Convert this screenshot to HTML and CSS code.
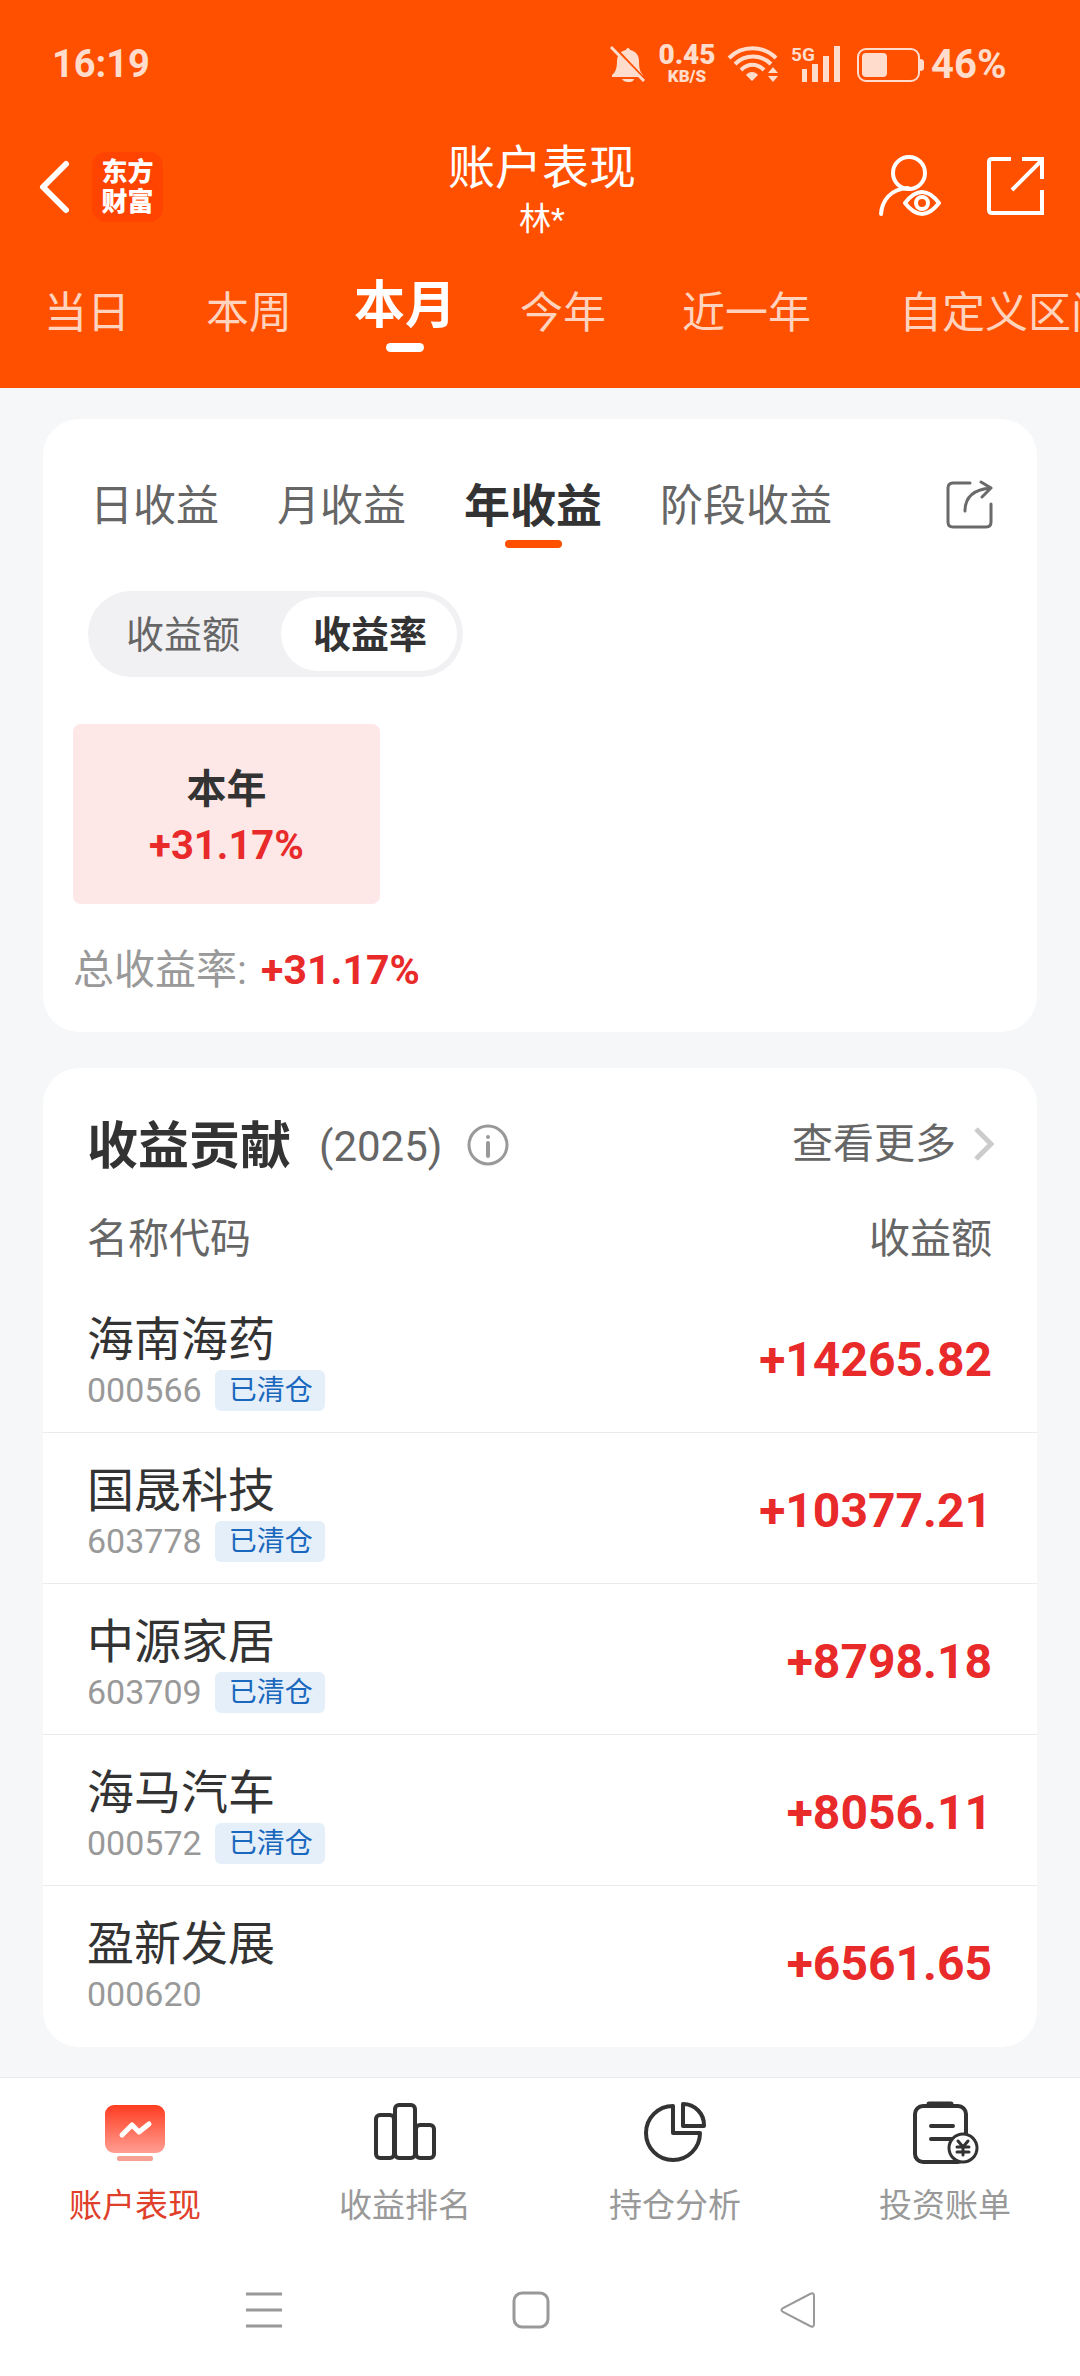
FILE: index.html
```html
<!DOCTYPE html>
<html lang="zh-CN">
<head>
<meta charset="utf-8">
<meta name="viewport" content="width=device-width">
<title>账户表现</title>
<link rel="stylesheet" href="styles.css">
</head>
<body>
<header class="header">
  <div class="status">
    <span class="status-time">16:19</span>
    <div class="status-icons">
      <svg width="38" height="40" viewBox="610 44 38 40" aria-hidden="true">
        <path fill="currentColor" d="M629 48c1 0 2 1 2 2 6 1 9 6 9 11 0 7 1 11 4 14v2h-31v-2c4-3 5-8 5-14 0-6 4-10 9-11 0-1 1-2 2-2zM623 79h12c-1 3-3 3-6 3s-5-1-6-3z"/>
        <path d="M614 46l34 36" stroke="#ff5000" stroke-width="3"/>
        <path d="M612 47l33 34" stroke="currentColor" stroke-width="3"/>
      </svg>
      <span class="speed"><b class="speed-value">0.45</b><b class="speed-unit">KB/S</b></span>
      <svg width="52" height="40" viewBox="727 44 52 40" aria-hidden="true">
        <g fill="none" stroke="currentColor" stroke-width="4">
          <path d="M729 58c13-13 34-13 47 0"/><path d="M735 64c10-10 26-10 36 0"/><path d="M741 70c7-7 16-7 23 0"/>
        </g>
        <path fill="currentColor" d="M752 81l-6-6c3-4 9-4 12 0zM768 73l5-6 5 6zM768 76l5 6 5-6z"/>
      </svg>
      <svg width="52" height="40" viewBox="789 44 52 40" aria-hidden="true">
        <text class="net" x="791" y="61">5G</text>
        <path fill="currentColor" d="M802 69h5v13h-5zM812 64h6v18h-6zM823 56h6v26h-6zM834 46h6v36h-6z"/>
      </svg>
      <svg class="battery" width="70" height="40" viewBox="851 44 70 40" aria-hidden="true">
        <rect x="858" y="49" width="61" height="32" rx="8" fill="none" stroke="currentColor" stroke-width="2"/>
        <rect x="862" y="53" width="25" height="24" rx="4" fill="currentColor"/>
        <path fill="currentColor" d="M920 59q4 0 4 3v6q0 3-4 3z"/>
      </svg>
      <span class="battery-level">46%</span>
    </div>
  </div>

  <div class="titlebar">
    <div class="titlebar-side">
      <button class="icon-button" aria-label="返回">
        <svg width="40" height="60" viewBox="36 157 40 60"><path d="M66 164L43 187l23 23" fill="none" stroke="#fff" stroke-width="6" stroke-linecap="round" stroke-linejoin="round"/></svg>
      </button>
      <span class="logo">东方<br>财富</span>
    </div>
    <div class="titlebar-main">
      <h1 class="title">账户表现</h1>
      <p class="subtitle">林*</p>
    </div>
    <div class="titlebar-side titlebar-actions">
      <button class="icon-button" aria-label="切换账户">
        <svg width="68" height="68" viewBox="876 153 68 68" fill="none" stroke="#fff" stroke-width="4" stroke-linecap="round">
          <circle cx="909" cy="173" r="16"/><path d="M881 214c1-13 9-25 27-26"/>
          <path d="M905 203q17-22 34 0q-17 22-34 0z" stroke-linejoin="round"/><circle cx="922" cy="203" r="6"/>
        </svg>
      </button>
      <button class="icon-button" aria-label="分享">
        <svg width="64" height="68" viewBox="984 153 64 68" fill="none" stroke="#fff" stroke-width="4">
          <path d="M1011 159h-19q-3 0-3 3v48q0 3 3 3h50v-23M1022 159h20v20M1042 160l-30 30"/>
        </svg>
      </button>
    </div>
  </div>

  <nav class="periods" aria-label="区间">
    <button class="period">当日</button>
    <button class="period">本周</button>
    <button class="period period-active" aria-current="true">本月</button>
    <button class="period">今年</button>
    <button class="period">近一年</button>
    <button class="period period-custom">自定义区间</button>
  </nav>
</header>

<main class="main">
  <section class="card profit">
    <div class="profit-head">
      <nav class="kinds" aria-label="收益类型">
        <button class="kind">日收益</button>
        <button class="kind">月收益</button>
        <button class="kind kind-active" aria-current="true">年收益</button>
        <button class="kind">阶段收益</button>
      </nav>
      <button class="icon-button" aria-label="分享收益">
        <svg width="50" height="60" viewBox="944 474 50 60" fill="none" stroke="#6a6a6a" stroke-width="3" stroke-linecap="round" stroke-linejoin="round">
          <path d="M970 481h-17q-5 0-5 5v34q0 5 5 5h33q5 0 5-5v-18M965 509q0-21 26-23M981 480l10 6-9 9"/>
        </svg>
      </button>
    </div>
    <div class="segment">
      <button class="segment-item" aria-pressed="false">收益额</button>
      <button class="segment-item segment-active" aria-pressed="true">收益率</button>
    </div>
    <div class="tile">
      <strong class="tile-name">本年</strong>
      <strong class="tile-value">+31.17%</strong>
    </div>
    <p class="total">总收益率: <strong class="total-value">+31.17%</strong></p>
  </section>

  <section class="card contribution">
    <div class="contribution-head">
      <h2 class="contribution-title">收益贡献</h2>
      <span class="contribution-year">(2025)</span>
      <button class="icon-button" aria-label="说明">
        <svg width="42" height="42" viewBox="0 0 42 42" fill="none" stroke="#999" stroke-width="3">
          <circle cx="21" cy="20" r="19"/><path d="M21 18v13" stroke-width="4" stroke-linecap="round"/><circle cx="21" cy="12" r="2" fill="#999" stroke="none"/>
        </svg>
      </button>
      <a class="more" href="#more">查看更多
        <svg width="22" height="36" viewBox="0 0 22 36"><path d="M2 3l15 15L2 33" fill="none" stroke="#ccc" stroke-width="5"/></svg>
      </a>
    </div>
    <table class="stocks">
      <thead><tr><th scope="col">名称代码</th><th scope="col">收益额</th></tr></thead>
      <tbody>
        <tr><td><div class="stock-name">海南海药</div><div class="stock-meta"><span class="stock-code">000566</span><span class="badge">已清仓</span></div></td><td>+14265.82</td></tr>
        <tr><td><div class="stock-name">国晟科技</div><div class="stock-meta"><span class="stock-code">603778</span><span class="badge">已清仓</span></div></td><td>+10377.21</td></tr>
        <tr><td><div class="stock-name">中源家居</div><div class="stock-meta"><span class="stock-code">603709</span><span class="badge">已清仓</span></div></td><td>+8798.18</td></tr>
        <tr><td><div class="stock-name">海马汽车</div><div class="stock-meta"><span class="stock-code">000572</span><span class="badge">已清仓</span></div></td><td>+8056.11</td></tr>
        <tr><td><div class="stock-name">盈新发展</div><div class="stock-meta"><span class="stock-code">000620</span></div></td><td>+6561.65</td></tr>
      </tbody>
    </table>
  </section>
</main>

<footer class="footer">
  <nav class="tabbar" aria-label="主导航">
    <a class="tab tab-active" href="#performance" aria-current="page">
      <svg width="68" height="68" viewBox="0 0 68 68">
        <defs><linearGradient id="screen" x2="0" y2="1"><stop stop-color="#ff3c20"/><stop offset="1" stop-color="#ff9e92"/></linearGradient></defs>
        <rect x="4" y="5" width="60" height="48" rx="9" fill="url(#screen)"/>
        <rect x="16" y="56" width="36" height="5" rx="2" fill="#f7a194"/>
        <path d="M21 35l10-10 7 7 10-8" fill="none" stroke="#fff" stroke-width="5" stroke-linecap="round" stroke-linejoin="round"/>
      </svg>
      <span>账户表现</span>
    </a>
    <a class="tab" href="#ranking">
      <svg width="68" height="68" viewBox="0 0 68 68" fill="none" stroke="#333" stroke-width="4">
        <rect x="5" y="15" width="18" height="43" rx="4"/><rect x="24" y="5" width="20" height="53" rx="4"/><rect x="45" y="25" width="18" height="33" rx="4"/>
      </svg>
      <span>收益排名</span>
    </a>
    <a class="tab" href="#positions">
      <svg width="68" height="68" viewBox="0 0 68 68" fill="none" stroke="#333" stroke-width="4" stroke-linejoin="round">
        <path d="M32 6a27 27 0 1 0 27 27H32z"/><path d="M42 4a21 21 0 0 1 21 22H42z"/>
      </svg>
      <span>持仓分析</span>
    </a>
    <a class="tab" href="#bills">
      <svg width="68" height="68" viewBox="0 0 68 68" fill="none" stroke="#333" stroke-width="4" stroke-linecap="round">
        <rect x="4" y="6" width="51" height="56" rx="8"/><path d="M18 4h22" stroke-width="5"/><path d="M20 26h22M20 39h22"/>
        <circle cx="52" cy="48" r="14" fill="#fff" stroke-width="3"/><path d="M47 41l5 6 5-6M52 47v8M46 47h12M46 52h12" stroke-width="3"/>
      </svg>
      <span>投资账单</span>
    </a>
  </nav>
  <div class="system">
    <button class="icon-button" aria-label="最近任务"><svg width="40" height="40" viewBox="0 0 40 40"><path d="M2 4h36M2 20h36M2 36h36" stroke="#999" stroke-width="3"/></svg></button>
    <button class="icon-button" aria-label="主屏幕"><svg width="40" height="40" viewBox="0 0 40 40"><rect x="3" y="3" width="34" height="34" rx="8" fill="none" stroke="#999" stroke-width="3"/></svg></button>
    <button class="icon-button" aria-label="后退"><svg width="40" height="40" viewBox="0 0 40 40"><path d="M32 4q4-2 4 2v28q0 4-4 2L5 22q-3-2 0-4z" fill="none" stroke="#999" stroke-width="2"/></svg></button>
  </div>
</footer>
</body>
</html>
```

FILE: styles.css
```css
* {
  box-sizing: border-box;
}

body {
  margin: 0;
  min-height: 100vh;
  display: flex;
  flex-direction: column;
  background: #f6f7f9;
  color: #333;
  font-family: Roboto, "Noto Sans CJK SC", sans-serif;
  font-size: 41px;
}

h1, h2, p {
  margin: 0;
}

button {
  padding: 0;
  border: 0;
  background: none;
  color: inherit;
  font: inherit;
  white-space: nowrap;
}

a {
  color: inherit;
  text-decoration: none;
}

svg {
  display: block;
  flex: none;
  overflow: visible;
}

.icon-button {
  flex: none;
}

/* Header */

.header {
  background: #ff5000;
  color: #fff;
  overflow: hidden;
}

.status {
  display: flex;
  align-items: center;
  justify-content: space-between;
  height: 128px;
  padding: 0 71px 0 52px;
  color: #ffdccb;
  font-size: 40px;
  font-weight: 700;
}

.status-time {
  font-size: 38px;
}

.status-icons {
  display: flex;
  align-items: center;
  gap: 10px;
}

.speed {
  display: flex;
  flex-direction: column;
  align-items: center;
  width: 60px;
}

.speed-value {
  font-size: 28px;
  line-height: 24px;
}

.speed-unit {
  font-size: 17px;
  line-height: 18px;
}

.net {
  fill: currentColor;
  font-size: 19px;
}

.battery-level {
  min-width: 78px;
}

.titlebar {
  display: grid;
  grid-template-columns: 1fr auto 1fr;
  align-items: center;
  height: 118px;
  padding: 0 32px 0 36px;
}

.titlebar-side {
  display: flex;
  align-items: center;
  gap: 16px;
}

.titlebar-actions {
  justify-content: flex-end;
  gap: 40px;
}

.logo {
  width: 71px;
  padding: 5px 0;
  border-radius: 14px;
  background: #ff4300;
  font-size: 26px;
  font-weight: 900;
  line-height: 30px;
  text-align: center;
}

.titlebar-main {
  padding-top: 10px;
  text-align: center;
}

.title {
  font-size: 47px;
  font-weight: 400;
  line-height: 54px;
}

.subtitle {
  font-size: 32px;
  line-height: 48px;
}

.periods {
  display: flex;
  align-items: flex-start;
  gap: 76px;
  margin-top: 26px;
  padding: 0 0 36px 44px;
}

.period {
  flex: none;
  padding-top: 9px;
  color: #ffd3bd;
  font-size: 43px;
  line-height: 64px;
}

.period-active {
  margin: 0 -12px 0 -14px;
  padding-top: 2px;
  color: #fff;
  font-size: 51px;
  font-weight: 700;
}

.period-active::after {
  content: "";
  display: block;
  width: 38px;
  height: 9px;
  margin: 5px auto 0;
  border-radius: 5px;
  background: #fff;
}

.period-custom {
  padding-left: 12px;
}

/* Cards */

.main {
  flex: 1;
  display: flex;
  flex-direction: column;
  gap: 36px;
  padding: 31px 43px 30px;
}

.card {
  border-radius: 36px;
  background: #fff;
}

.profit {
  padding: 57px 43px 32px 30px;
}

.profit-head {
  display: flex;
  align-items: flex-start;
  justify-content: space-between;
  height: 72px;
  padding-left: 17px;
}

.kinds {
  display: flex;
  align-items: flex-start;
  gap: 58px;
}

.kind {
  color: #666;
  font-size: 43px;
  line-height: 60px;
}

.kind-active {
  color: #333;
  font-size: 46px;
  font-weight: 700;
}

.kind-active::after {
  content: "";
  display: block;
  width: 57px;
  height: 8px;
  margin: 4px auto 0;
  border-radius: 4px;
  background: #ff5000;
}

.segment {
  display: flex;
  width: fit-content;
  margin: 43px 0 47px 15px;
  padding: 6px;
  border-radius: 43px;
  background: #f1f1f4;
}

.segment-item {
  padding: 2px 30px 0 32px;
  border-radius: 37px;
  color: #666;
  font-size: 38px;
  line-height: 72px;
}

.segment-active {
  margin-left: 11px;
  background: #fff;
  color: #333;
  font-weight: 700;
}

.tile {
  display: flex;
  flex-direction: column;
  justify-content: center;
  width: 307px;
  height: 180px;
  padding-top: 8px;
  border-radius: 8px;
  background: #fde8e7;
  font-size: 40px;
  line-height: 56px;
  text-align: center;
}

.tile-value,
.total-value {
  color: #e92a2a;
}

.total-value {
  margin-left: 4px;
}

.total {
  margin-top: 36px;
  color: #999;
  line-height: 60px;
}

/* Contribution */

.contribution {
  padding: 48px 0 10px;
}

.contribution-head {
  display: flex;
  align-items: center;
  height: 60px;
  margin-bottom: 18px;
  padding: 0 41px 0 44px;
  color: #666;
}

.contribution-title {
  margin-right: 28px;
  padding-top: 2px;
  color: #333;
  font-size: 51px;
  line-height: 60px;
}

.contribution-year {
  margin-right: 25px;
  font-size: 42px;
}

.more {
  display: flex;
  align-items: center;
  gap: 18px;
  margin-left: auto;
  line-height: 60px;
  padding-bottom: 4px;
}

.stocks {
  width: 100%;
  border-spacing: 0;
}

.stocks th {
  height: 88px;
  padding: 0 45px 6px 44px;
  color: #666;
  font-weight: 400;
  text-align: left;
}

.stocks td {
  height: 151px;
  padding: 0 45px 0 44px;
  border-bottom: 1px solid #ebebeb;
}

.stocks tr > :last-child {
  text-align: right;
}

.stocks td:last-child {
  padding-top: 4px;
  color: #e92a2a;
  font-size: 48px;
  font-weight: 700;
}

.stocks tr:last-child td {
  border-bottom-color: transparent;
}

.stock-name {
  margin-top: 6px;
  font-size: 47px;
  line-height: 60px;
}

.stock-meta {
  display: flex;
  align-items: center;
  gap: 13px;
  height: 41px;
}

.stock-code {
  color: #999;
  font-size: 34px;
}

.badge {
  padding: 0 12px 0 14px;
  border-radius: 6px;
  background: #e4effa;
  color: #1a68bd;
  font-size: 28px;
  line-height: 41px;
}

/* Footer */

.footer {
  background: #fff;
}

.tabbar {
  display: grid;
  grid-template-columns: repeat(4, 1fr);
  padding-top: 22px;
  border-top: 1px solid #e9ebed;
}

.tab {
  display: flex;
  flex-direction: column;
  align-items: center;
  gap: 14px;
  color: #999;
  font-size: 33px;
  line-height: 48px;
}

.tab-active {
  color: #e0402a;
}

.system {
  display: grid;
  grid-template-columns: repeat(3, 1fr);
  justify-items: center;
  padding: 60px 148px 46px 130px;
}
```
